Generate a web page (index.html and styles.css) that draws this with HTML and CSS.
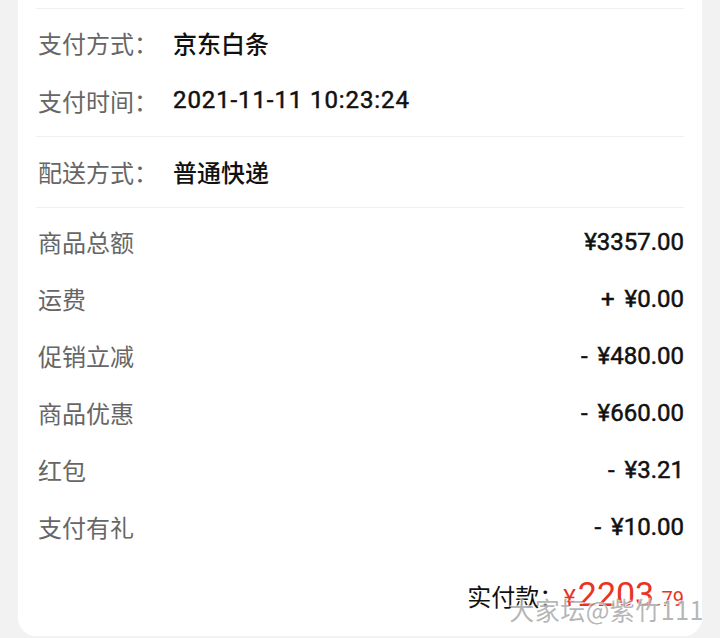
FILE: index.html
```html
<!DOCTYPE html>
<html lang="zh-CN">
<head>
  <meta charset="UTF-8" />
  <meta name="viewport" content="width=device-width, initial-scale=1.0" />
  <title>订单详情</title>
  <link rel="stylesheet" href="styles.css">
</head>
<body>

  <div class="order-card">
    <div class="section">
      <div class="info-row">
        <span class="info-label">支付方式：</span>
        <span class="info-value">京东白条</span>
      </div>
      <div class="info-row">
        <span class="info-label">支付时间：</span>
        <span class="info-value num">2021-11-11 10:23:24</span>
      </div>
    </div>

    <div class="section">
      <div class="info-row">
        <span class="info-label">配送方式：</span>
        <span class="info-value">普通快递</span>
      </div>
    </div>

    <div class="section">
      <div class="price-row">
        <span class="price-label">商品总额</span>
        <span class="price-value">¥3357.00</span>
      </div>
      <div class="price-row">
        <span class="price-label">运费</span>
        <span class="price-value"><span class="sign">+</span>¥0.00</span>
      </div>
      <div class="price-row">
        <span class="price-label">促销立减</span>
        <span class="price-value"><span class="sign">-</span>¥480.00</span>
      </div>
      <div class="price-row">
        <span class="price-label">商品优惠</span>
        <span class="price-value"><span class="sign">-</span>¥660.00</span>
      </div>
      <div class="price-row">
        <span class="price-label">红包</span>
        <span class="price-value"><span class="sign">-</span>¥3.21</span>
      </div>
      <div class="price-row">
        <span class="price-label">支付有礼</span>
        <span class="price-value"><span class="sign">-</span>¥10.00</span>
      </div>

      <div class="total-row">
        <span class="total-label">实付款：</span>
        <span class="total-amount"><span class="yen">¥</span><span class="int">2203</span><span class="dec">.79</span></span>
      </div>
    </div>

    <div class="watermark">大家坛@紫竹111</div>
  </div>

</body>
</html>
```

FILE: styles.css
```css
* {
  box-sizing: border-box;
}

body {
  margin: 0;
  padding: 0;
  background: #f2f2f2;
  font-family: 'Noto Sans CJK SC', 'Noto Sans', sans-serif;
  height: 638px;
  overflow: hidden;
}

.order-card {
  position: relative;
  margin: 0 18px;
  padding: 8px 18px 0;
  height: 636px;
  background: #fff;
  border-radius: 0 0 18px 18px;
}

.section {
  border-top: 1px solid #f0f0f0;
  padding: 5px 0 7px;
}

.section:first-child {
  padding-top: 4px;
}

.info-row,
.price-row {
  display: flex;
  align-items: center;
  font-size: 24px;
}

.info-row {
  height: 58px;
}

.price-row {
  height: 57px;
  justify-content: space-between;
}

.info-label,
.price-label {
  color: #666;
  padding-left: 2px;
}

.info-label {
  width: 137px;
}

.info-value {
  color: #111;
  font-weight: 500;
}

.info-value.num {
  font-family: Roboto, 'Noto Sans CJK SC', sans-serif;
  font-weight: 400;
  -webkit-text-stroke: 0.5px #111;
  font-size: 24px;
  letter-spacing: 0.9px;
}

.price-value {
  color: #111;
  font-family: Roboto, 'Noto Sans CJK SC', sans-serif;
  font-weight: 400;
  -webkit-text-stroke: 0.5px #111;
  font-size: 24px;
}

.price-value .sign {
  margin-right: 10px;
}

.total-row {
  display: flex;
  justify-content: flex-end;
  align-items: baseline;
  padding-top: 21px;
  line-height: 36px;
}

.total-label {
  font-size: 24px;
  color: #111;
}

.total-amount {
  color: #e93323;
  font-family: Roboto, sans-serif;
}

.total-amount .yen {
  font-size: 24px;
  margin-right: 2px;
}

.total-amount .int {
  font-size: 34px;
}

.total-amount .dec {
  font-size: 20px;
  margin-left: 2px;
}

.watermark {
  position: absolute;
  right: -2px;
  bottom: 12px;
  font-size: 25px;
  line-height: 30px;
  color: rgba(150, 150, 150, 0.7);
  text-shadow: 1px 1px 0 rgba(255, 255, 255, 0.9), -1px -1px 0 rgba(255, 255, 255, 0.6);
  letter-spacing: 0.5px;
  pointer-events: none;
}
```
